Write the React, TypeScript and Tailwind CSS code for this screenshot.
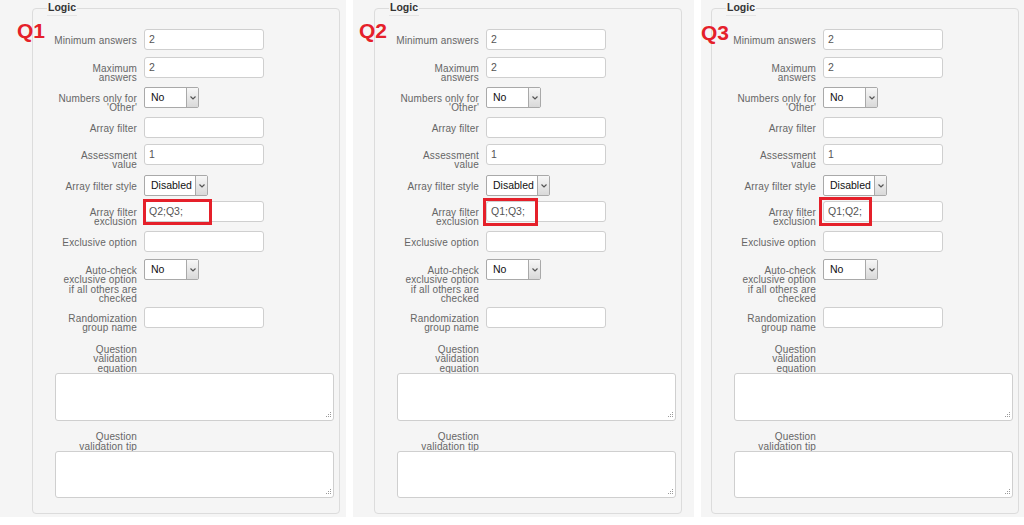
import React from 'react';

type Field = {
  label: string[];
  row: string;
  value?: string;
  select?: string;
  selectW?: string;
  mark?: boolean;
};

type PanelSpec = {
  q: string;
  width: string;
  inset: string;
  qPos: string;
  exclusion: string;
  mark: string;
};

const panels: PanelSpec[] = [
  { q: 'Q1', width: 'w-[346px]', inset: 'pl-[32px]', qPos: 'left-[17px] top-[19px]', exclusion: 'Q2;Q3;', mark: 'left-[-1px] top-[-2px] w-[69px] h-[26px]' },
  { q: 'Q2', width: 'w-[341px]', inset: 'pl-[21px]', qPos: 'left-[6px] top-[19px]', exclusion: 'Q1;Q3;', mark: 'left-[-3px] top-[-3px] w-[55px] h-[28px]' },
  { q: 'Q3', width: 'w-[325px]', inset: 'pl-[10px]', qPos: 'left-[0px] top-[21px]', exclusion: 'Q1;Q2;', mark: 'left-[-4px] top-[-4px] w-[53px] h-[29px]' },
];

const fieldsFor = (exclusion: string): Field[] => [
  { label: ['Minimum answers'], row: 'h-[28px]', value: '2' },
  { label: ['Maximum', 'answers'], row: 'h-[30px]', value: '2' },
  { label: ['Numbers only for', "'Other'"], row: 'h-[30px]', select: 'No', selectW: 'w-[55px]' },
  { label: ['Array filter'], row: 'h-[27px]' },
  { label: ['Assessment', 'value'], row: 'h-[31px]', value: '1' },
  { label: ['Array filter style'], row: 'h-[26px]', select: 'Disabled', selectW: 'w-[64px]' },
  { label: ['Array filter', 'exclusion'], row: 'h-[30px]', value: exclusion, mark: true },
  { label: ['Exclusive option'], row: 'h-[28px]' },
  { label: ['Auto-check', 'exclusive option', 'if all others are', 'checked'], row: 'h-[48px]', select: 'No', selectW: 'w-[55px]' },
  { label: ['Randomization', 'group name'], row: 'h-[36px]' },
];

const Label = ({ lines, className = '' }: { lines: string[]; className?: string }) => (
  <div className={`text-right text-[10px] leading-[9.5px] tracking-[0.15px] text-[#666] whitespace-nowrap ${className}`}>
    {lines.map((l) => (
      <div key={l}>{l}</div>
    ))}
  </div>
);

const TextBox = ({ value }: { value?: string }) => (
  <div className="w-[120px] h-[21px] bg-white border border-[#cfcfcf] rounded-[3px] pl-[4px] flex items-center text-[10.5px] text-[#555]">
    {value}
  </div>
);

const SelectBox = ({ value, width }: { value: string; width?: string }) => (
  <div className={`${width} h-[21px] bg-white border border-[#a9a9a9] rounded-[2px] flex items-stretch`}>
    <div className="flex-1 pl-[6px] flex items-center text-[10.5px] text-[#111]">{value}</div>
    <div className="w-[12px] border-l border-[#a9a9a9] bg-gradient-to-b from-[#f7f7f7] to-[#d9d9d9] flex items-center justify-center">
      <svg width="6" height="4" viewBox="0 0 6 4">
        <polyline points="0.5,0.5 3,3 5.5,0.5" fill="none" stroke="#555" strokeWidth="1.2" />
      </svg>
    </div>
  </div>
);

// textarea with the old dotted resize grip in its corner
const Area = ({ height }: { height: string }) => (
  <div className={`relative ml-[22px] w-[279px] ${height}`}>
    <textarea className="w-full h-full bg-white border border-[#cfcfcf] rounded-[3px] resize-none outline-none" />
    <svg className="absolute right-[2px] bottom-[3px]" width="6" height="6" viewBox="0 0 6 6" fill="#9a9a9a">
      <rect x="4" y="0" width="1" height="1" />
      <rect x="2" y="2" width="1" height="1" />
      <rect x="4" y="2" width="1" height="1" />
      <rect x="0" y="4" width="1" height="1" />
      <rect x="2" y="4" width="1" height="1" />
      <rect x="4" y="4" width="1" height="1" />
    </svg>
  </div>
);

const Panel = ({ spec }: { spec: PanelSpec }) => (
  <div className={`relative ${spec.width} h-[517px] bg-[#f5f5f5] ${spec.inset} shrink-0`}>
    <fieldset className="w-[308px] border border-[#dcdcdc] rounded-[4px]">
      <legend className="ml-[14px] px-[1px] text-[10.5px] leading-[15px] font-bold text-[#333] border-b border-[#e4e4e4]">
        Logic
      </legend>
      <div className="pt-[13px] pb-[15px]">
        {fieldsFor(spec.exclusion).map((f) => (
          <div key={f.label.join(' ')} className={`flex items-start gap-[7px] ${f.row}`}>
            <Label lines={f.label} className="w-[104px] pt-[6.5px]" />
            <div className="relative">
              {f.select ? <SelectBox value={f.select} width={f.selectW} /> : <TextBox value={f.value} />}
              {f.mark && <div className={`absolute border-[3px] border-[#e5202a] ${spec.mark}`} />}
            </div>
          </div>
        ))}
        <Label lines={['Question', 'validation', 'equation']} className="w-[104px] h-[30px] pt-[1.5px]" />
        <Area height="h-[48px]" />
        <Label lines={['Question', 'validation tip']} className="w-[104px] h-[20px] mt-[10px] pt-[1px]" />
        <Area height="h-[47px]" />
      </div>
    </fieldset>
    <div className={`absolute ${spec.qPos} text-[21px] leading-[24px] font-bold text-[#e5202a]`}>{spec.q}</div>
  </div>
);

export default function App() {
  return (
    <div className="w-[1024px] h-[525px] bg-white flex gap-[7px] font-['Liberation_Sans',Arial,sans-serif] overflow-hidden">
      <Panel spec={panels[0]} />
      <Panel spec={panels[1]} />
      <Panel spec={panels[2]} />
    </div>
  );
}
